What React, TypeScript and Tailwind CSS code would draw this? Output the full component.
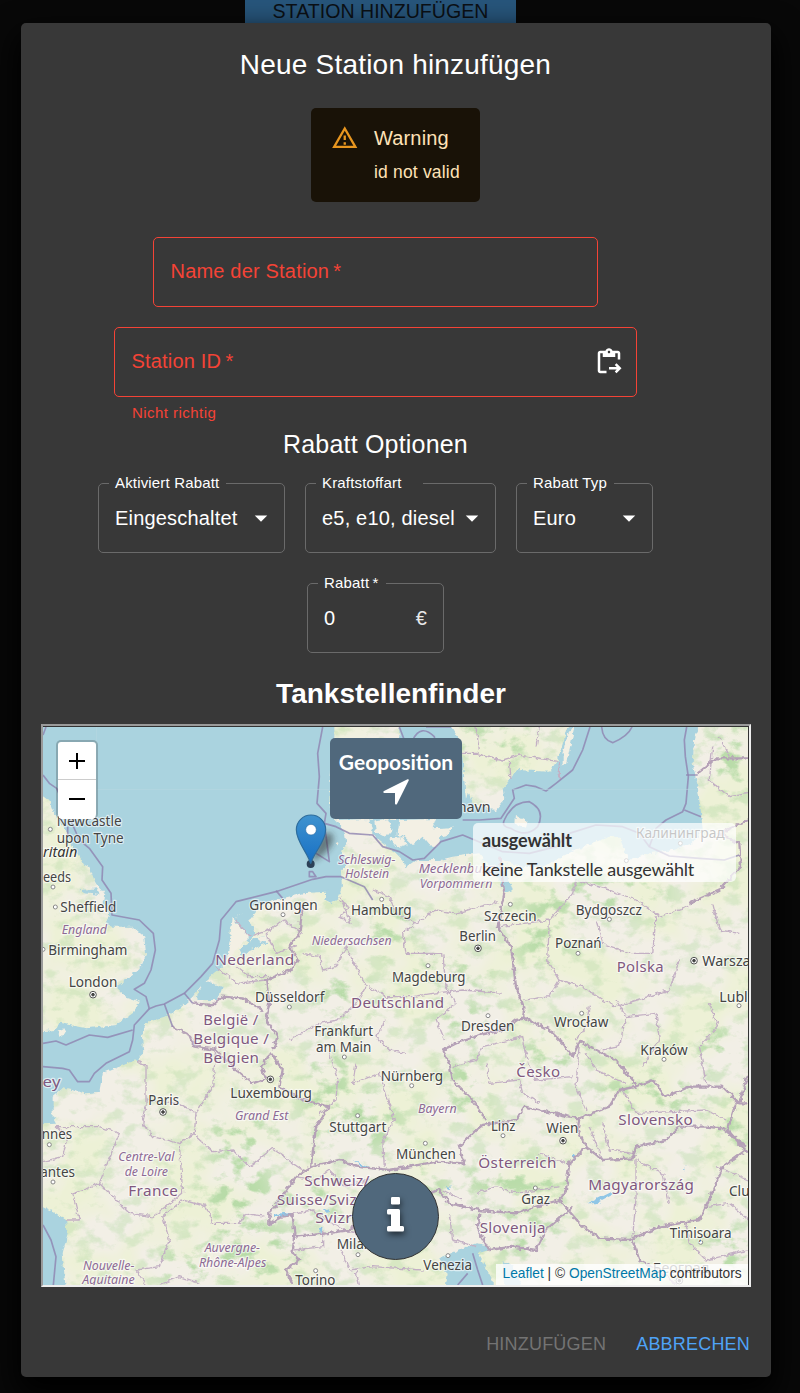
import React from "react";

type Label = [text: string, x: number, y: number, width: number];

/* Map units: three per CSS pixel. */
const cities: Label[] = [
  ["Newcastle", 62, 317, 195],
  ["upon Tyne", 62, 370, 201],
  ["eeds", 21, 486, 84],
  ["Sheffield", 73, 577, 168],
  ["Birmingham", 37, 704, 237],
  ["London", 98, 801, 146],
  ["Groningen", 640, 570, 205],
  ["Hamburg", 945, 584, 182],
  ["Düsseldorf", 657, 846, 208],
  ["Magdeburg", 1068, 785, 220],
  ["Szczecin", 1344, 602, 158],
  ["Bydgoszcz", 1619, 584, 199],
  ["Berlin", 1270, 662, 110],
  ["Poznań", 1557, 683, 140],
  ["Warszawa", 1999, 738, 202],
  ["Lublin", 2050, 845, 122],
  ["København", 1136, 276, 228],
  ["Калининград", 1800, 354, 266],
  ["Frankfurt", 835, 947, 176],
  ["am Main", 840, 997, 166],
  ["Nürnberg", 1034, 1084, 187],
  ["Luxembourg", 583, 1134, 245],
  ["Paris", 337, 1155, 92],
  ["Stuttgart", 880, 1236, 171],
  ["München", 1080, 1316, 180],
  ["Rennes", -30, 1258, 138],
  ["Nantes", -18, 1372, 135],
  ["Milano", 902, 1588, 132],
  ["Torino", 778, 1696, 120],
  ["Dresden", 1275, 933, 160],
  ["Wrocław", 1554, 922, 163],
  ["Kraków", 1813, 1004, 142],
  ["Linz", 1365, 1234, 73],
  ["Wien", 1531, 1239, 96],
  ["Graz", 1456, 1452, 86],
  ["Cluj-Napoca", 2079, 1428, 232],
  ["Timișoara", 1901, 1553, 186],
  ["Venezia", 1162, 1651, 146],
  ["Београд", 1850, 1660, 170],
];

const countries: Label[] = [
  ["Nederland", 538, 736, 238],
  ["Deutschland", 945, 863, 280],
  ["Polska", 1742, 755, 142],
  ["België /", 502, 916, 166],
  ["Belgique /", 472, 973, 228],
  ["Belgien", 502, 1029, 168],
  ["France", 277, 1429, 150],
  ["Jersey", -72, 1101, 147],
  ["Schweiz/", 805, 1397, 196],
  ["Suisse/Svizzera/", 723, 1454, 350],
  ["Svizra", 838, 1510, 138],
  ["Česko", 1441, 1072, 132],
  ["Slovensko", 1747, 1216, 224],
  ["Österreich", 1327, 1345, 235],
  ["Magyarország", 1657, 1409, 318],
  ["Slovenija", 1331, 1540, 199],
];

const regions: Label[] = [
  ["England", 77, 643, 136],
  ["Schleswig-", 906, 431, 172],
  ["Holstein", 927, 474, 132],
  ["Niedersachsen", 827, 675, 240],
  ["Mecklenburg-", 1148, 459, 242],
  ["Vorpommern", 1151, 503, 218],
  ["Grand Est", 597, 1199, 160],
  ["Bayern", 1146, 1179, 116],
  ["Centre-Val", 247, 1324, 168],
  ["de Loire", 266, 1368, 130],
  ["Auvergne-", 506, 1596, 166],
  ["Rhône-Alpes", 489, 1640, 202],
  ["Nouvelle-", 141, 1650, 154],
  ["Aquitaine", 139, 1693, 157],
];

const towns: [number, number][] = [
  [43, 328], [51, 501], [58, 561], [21, 688], [741, 584], [1037, 538], [760, 861],
  [1176, 737], [1423, 553], [1720, 598], [1626, 700], [2109, 857], [1771, 422],
  [1933, 370], [925, 1011], [1127, 1097], [965, 1187], [1168, 1270], [40, 1274],
  [51, 1386], [966, 1604], [839, 1652], [1356, 887], [1637, 880], [1884, 1018],
  [1401, 1247], [1498, 1404], [1994, 1567], [1236, 1607],
];

const capitals: [number, number][] = [
  [171, 824], [1326, 685], [1974, 722], [703, 1078], [381, 1176], [1581, 1262], [1930, 1682],
];

const water = [
  "M0 0H895V55L885 150L880 240L890 290L925 330L932 375L915 390L935 430L915 455L918 500L905 540L885 545L870 515L800 520L740 535L650 558L600 590L585 620L580 700L560 740L500 790L470 830L430 866L385 890L325 910L318 950L322 1000L300 1020L250 1040L200 1060L190 1115L150 1120L80 1105L50 1130V1190L60 1208L0 1210V935L60 930L70 908L100 915L150 925L240 915L290 880L312 845L270 830L240 800L270 780L310 745L330 700L325 650L290 620L230 620L210 610L220 580L200 550L205 520L175 480L160 440L140 430L110 380L90 330L60 290L40 240L0 210Z",
  "M0 1450L60 1480L90 1500L95 1540L80 1600L90 1720H0Z",
  "M1225 1720L1235 1665L1210 1615L1280 1585L1320 1570L1350 1575L1360 1590L1325 1600L1370 1680V1720Z",
  "M1400 1620L1430 1640L1470 1720H1410Z",
  "M1090 0H1235L1270 60L1280 120L1290 240L1295 215L1320 260L1380 270L1405 240L1400 205L1425 175L1440 150L1540 155L1565 120L1590 40L1600 0H2000L1975 50L1970 130L1985 200L1995 280L2000 330L1970 370L1910 390L1840 400L1780 420L1765 390L1750 350H1720L1640 380L1580 410L1520 440H1460L1390 420L1420 480L1430 510L1405 520L1390 480L1330 400L1250 410L1210 420H1140L1105 445L1100 420L1080 400L1040 370L1010 345L930 335L900 300L905 290L1080 300L1090 200Z",
  "M640 560L665 570L640 600L655 640L640 670L625 660L615 620L590 600Z",
  "M660 650L690 645L695 670L640 690L620 710L610 690Z",
  "M500 780L560 800L545 840L480 840Z",
  "M130 510L185 505L190 525L145 520Z",
  "M870 510L890 520L885 555L870 540Z",
];

const islands = [
  "M1440 285L1475 305L1470 323L1438 312Z",
  "M1595 45L1618 10L1605 70L1590 130L1580 140V100Z",
  "M900 300L1000 297L1010 340L985 355L960 340L930 340Z",
  "M1015 305L1055 298L1070 330L1050 352L1020 335Z",
  "M1090 300L1200 297L1190 325L1250 322L1235 345L1210 350L1205 380L1180 375L1160 350L1130 375L1105 350L1085 345Z",
  "M1060 355L1100 352L1115 375L1085 385Z",
  "M590 592L610 620L640 650L600 690L570 735L585 640Z",
  "M65 935L85 925L92 938L70 947Z",
  "M665 650L690 645L695 665L672 668Z",
  "M900 370L912 365L906 380Z",
];

const seaBorders = [
  "M21 165L40 190L62 205L130 360L160 385L200 440L198 480L225 520L228 585L310 600L352 640L358 690L345 750L325 790L295 808L330 830L340 866L360 858L385 852L445 820L495 770L530 730L550 660L555 600L600 545L720 515L830 478L870 470H915L950 485L985 500L1010 540",
  "M720 512L740 535",
  "M860 21L845 100L850 170L843 250L870 280L865 310L900 320L940 340L1010 345L1040 380L1090 395L1130 420L1165 415L1215 365L1280 345L1400 395L1480 400L1560 380L1600 340L1680 315L1760 320L1810 340L1840 380L1900 408L1990 415L2065 420L2110 405",
  "M865 310L880 425L840 400M820 455H830L840 470H820Z",
  "M1090 21L1105 60L1080 80M1130 60Q1155 10 1195 50L1200 90M1170 21H1245",
  "M1280 300L1330 300L1395 295L1435 235L1430 210L1470 195L1500 200L1530 213L1560 190L1610 150L1640 90L1662 21",
  "M1405 300Q1430 245 1480 245Q1530 270 1505 320Q1470 355 1425 325Q1395 320 1405 300",
  "M1697 21Q1700 60 1730 68Q1775 50 1788 21",
  "M1952 21L1945 60L1948 110L1957 170L1950 250L1940 275L1890 300L1860 325L1840 380",
  "M1950 165H1985M1945 270L1995 290",
  "M385 852L410 920M445 820L470 850M340 866L295 915L290 960L280 995L210 1030L175 1060L160 1085H125L100 1050L80 1045L21 1040",
  "M21 970L60 963L90 975L160 945L215 952L290 930",
  "M21 1515L45 1560L60 1610L52 1695",
  "M1310 1600L1325 1650L1340 1695M1295 1660L1265 1695",
  "M21 45L30 21M95 320V350",
];

const borders = [
  "M800 560L790 640L760 680L785 720L765 750L690 780L700 850L690 900L725 950L710 990",
  "M470 850L530 855L560 830L620 835L680 870",
  "M410 920L460 945L475 980L540 990L600 1050L650 1090L690 1075L675 1040L705 1000L740 1050L730 1100L800 1140L880 1160L840 1220L825 1340L780 1370L745 1420L700 1480L700 1515L735 1490L770 1485L775 1540L770 1600L790 1620L750 1650L770 1695",
  "M825 1340L910 1320L960 1340L1060 1350L1120 1340L1200 1325L1285 1330L1270 1280L1320 1230L1340 1215L1440 1200L1465 1160L1510 1170L1600 1190L1630 1195",
  "M1350 1200L1310 1140L1250 1080L1240 1030L1220 990L1260 970L1330 945L1400 930L1440 900L1470 895L1540 930L1580 970L1610 1010L1630 965L1690 995L1740 1020L1790 1080L1800 1100",
  "M1390 410L1405 520L1385 620L1425 680L1440 800L1465 865L1460 900",
  "M1630 1195L1720 1160L1750 1110L1800 1100L1850 1080L1890 1130L1960 1100L2060 1100L2110 1150H2137",
  "M1630 1195L1625 1230L1650 1280L1700 1320L1790 1315L1800 1280L1890 1260L1930 1220L2010 1220L2060 1225L2130 1280",
  "M1650 1280L1600 1330L1590 1410L1570 1440L1500 1460L1440 1480L1330 1470L1240 1450L1210 1410",
  "M1570 1440L1640 1520L1690 1555L1780 1560L1870 1520L1990 1500L2020 1440L2060 1340L2130 1290",
  "M1330 1480L1325 1530L1360 1590L1430 1580L1500 1590L1530 1530L1610 1460",
  "M1210 1410L1150 1430L1060 1440L940 1530L870 1540L780 1550",
  "M1790 1560L1810 1620L1870 1650L1920 1695",
  "M2137 115L2040 115L1985 160M2137 300L2050 340L2110 370L2115 440L2050 510L1960 550",
  "M2100 1150L2075 1230L2137 1300M2137 1060L2110 1150",
];

const provinces = [
  "M1240 100L1320 100L1400 120L1450 105L1540 120L1570 125V180M1320 21L1330 90M1510 21L1500 80M1425 180L1420 120",
  "M600 600L640 650L700 630L740 600L800 640M690 640L720 700L780 680M600 740L640 770L700 770M540 740L600 790L690 780",
  "M905 540L940 560L910 590L945 610L915 530M800 700L850 710L860 750L900 740L930 680L970 760L990 800L960 850L905 900L850 910L760 960",
  "M1010 510L1060 530L1080 580L1140 610L1200 570L1260 580L1385 545M1140 610L1100 640L1110 700L1220 700L1230 800L1260 850L1200 900L1225 960",
  "M1000 800L1050 830L1130 830L1190 820L1280 810L1400 820M1390 620L1540 600L1610 520L1620 480L1720 510L1800 540L1870 590L1960 560",
  "M1540 600L1535 720L1570 780L1640 800L1700 840L1740 860L1900 810L1930 720M1680 600L1700 670L1780 700L1850 700L1860 590M2030 550L2050 630L2110 640",
  "M1465 840L1540 830L1570 780M1660 860L1650 920L1620 960M1740 840L1770 890L1750 980L1700 990M1770 890L1860 880L1870 960L1820 1040M2020 850L2045 920L1990 980L2010 1090",
  "M1250 1040L1320 1020L1340 980L1460 950L1480 1040M1350 1030L1360 1090L1450 1080L1460 1120L1510 1150M1480 1040L1500 1080L1610 1070M1630 970L1620 1100L1650 1170M1650 1000L1680 1050L1770 1090",
  "M300 1020L330 1040V1160L320 1210L350 1250L430 1270L440 1420L350 1490L280 1480L190 1390L250 1240L190 1220L60 1220",
  "M330 1140L430 1150L480 1180L475 1240L430 1270M540 980L530 1100L480 1180M480 1250L530 1295L590 1290L640 1340L710 1285L770 1330L800 1350",
  "M440 1440L510 1460L530 1510L610 1510L630 1480L690 1490M440 1440L380 1490L400 1560L370 1640L300 1650L330 1695M370 1695L430 1670L490 1690M190 1390L110 1420L130 1500L90 1500M60 1220L95 1250L80 1310L21 1325",
  "M1050 900L1020 950L1060 990L1110 1000M880 1000L905 1070L900 1140L850 1180M960 1030L950 1090L1030 1060L1050 1120L1075 1200L1040 1260L1045 1340",
  "M780 1370L840 1380L880 1350L930 1400L1000 1380M770 1480L830 1470L870 1500L930 1530L960 1540M775 1590L860 1580V1530M915 1590L940 1650L1010 1640L1160 1650M960 1650L970 1695",
  "M1320 1420L1380 1400L1440 1420L1570 1400M1220 1410L1280 1440M1510 1300L1590 1330M1660 1220L1700 1320M1700 1210L1720 1290L1790 1300M1800 1320L1880 1360L1900 1450M1800 1320V1440L1790 1550M1760 1110L1800 1180L2010 1170L2070 1200",
  "M2040 1340L2137 1380M2010 1460L2080 1450L2137 1500M1950 1510L1960 1570L2010 1620L2137 1590M2030 80L2020 180L2080 230L2137 220M2050 50L2080 110M1240 1480L1250 1560L1320 1580",
];

const lakes = [
  "M1655 1450L1725 1415L1735 1420L1680 1450Z",
  "M703 1492Q740 1470 768 1485L735 1488Z",
  "M950 1320L1000 1340L985 1345Z",
  "M1610 1305L1620 1298L1612 1325Z",
  "M862 1470L880 1465L878 1478Z",
  "M848 1525L860 1522L856 1540Z",
  "M1232 1398L1245 1400L1240 1408Z",
  "M1945 1345L1952 1335L1945 1355Z",
];

/* Wooded uplands, drawn as soft ellipses: cx, cy, rx, ry. */
const uplands: [number, number, number, number][] = [
  [1380, 60, 130, 50], [2080, 130, 60, 110], [1300, 900, 120, 40], [1560, 1000, 110, 50],
  [1450, 1380, 170, 60], [1120, 1400, 130, 50], [880, 1130, 70, 150], [930, 850, 90, 90],
  [1850, 1120, 170, 60], [2080, 1230, 60, 60], [1440, 1540, 130, 60], [1010, 1200, 80, 90],
  [620, 1250, 110, 60], [600, 1420, 110, 110], [650, 1600, 130, 90], [2080, 1600, 60, 90],
  [1700, 520, 200, 60], [1520, 640, 80, 100], [840, 1440, 90, 60], [1060, 620, 60, 80],
  [1290, 1090, 60, 100], [1250, 760, 120, 40], [2040, 980, 70, 60], [460, 1640, 90, 60],
];

function MapLabels({ items, className }: { items: Label[]; className: string }) {
  return (
    <g className={className} stroke="#ffffff" strokeOpacity={0.6} strokeWidth={7} strokeLinejoin="round" paintOrder="stroke">
      {items.map(([text, x, y, width]) => (
        <text key={text} x={x} y={y} textLength={width} lengthAdjust="spacingAndGlyphs">
          {text}
        </text>
      ))}
    </g>
  );
}

function EuropeMap() {
  return (
    <svg viewBox="21 21 2115 1674" className="block h-[558px] w-[705px]">
      <defs>
        <filter id="rough" filterUnits="userSpaceOnUse" x="0" y="0" width="2160" height="1720">
          <feTurbulence type="fractalNoise" baseFrequency="0.07" numOctaves="2" seed="4" />
          <feDisplacementMap in="SourceGraphic" scale="16" xChannelSelector="R" yChannelSelector="G" />
        </filter>
        <filter id="forest" x="0" y="0" width="100%" height="100%" colorInterpolationFilters="sRGB">
          <feTurbulence type="fractalNoise" baseFrequency="0.017 0.024" numOctaves="5" seed="12" />
          <feColorMatrix values="0 0 0 0 .72  0 0 0 0 .86  0 0 0 0 .66  5 0 0 0 -2.5" />
        </filter>
        <filter id="farm" x="0" y="0" width="100%" height="100%" colorInterpolationFilters="sRGB">
          <feTurbulence type="fractalNoise" baseFrequency="0.005" numOctaves="3" seed="7" />
          <feColorMatrix values="0 0 0 0 .93  0 0 0 0 .945  0 0 0 0 .84  4 0 0 0 -1.6" />
        </filter>
        <filter id="soft" filterUnits="userSpaceOnUse" x="0" y="0" width="2160" height="1720">
          <feGaussianBlur stdDeviation="28" />
        </filter>
        <mask id="wooded" maskUnits="userSpaceOnUse" x="0" y="0" width="2160" height="1720">
          <rect width="2160" height="1720" fill="#666" />
          <g fill="#fff" filter="url(#soft)">
            {uplands.map(([cx, cy, rx, ry]) => <ellipse key={`${cx}-${cy}`} cx={cx} cy={cy} rx={rx} ry={ry} />)}
          </g>
        </mask>
        <filter id="shade" x="-50%" y="-50%" width="200%" height="200%">
          <feGaussianBlur stdDeviation="9" />
        </filter>
        <linearGradient id="pin" x1="0" y1="0" x2="0" y2="1">
          <stop offset="0" stopColor="#3f93cf" />
          <stop offset="1" stopColor="#176fc4" />
        </linearGradient>
      </defs>

      <rect x="21" y="21" width="2115" height="1674" fill="#f2efe6" />
      <rect x="21" y="21" width="2115" height="1674" filter="url(#farm)" />
      <g mask="url(#wooded)">
        <rect x="21" y="21" width="2115" height="1674" filter="url(#forest)" />
      </g>

      <g filter="url(#rough)">
        <g fill="#aad3df">{water.map((d) => <path key={d} d={d} />)}</g>
        <g fill="#f3f0e4">{islands.map((d) => <path key={d} d={d} />)}</g>
        <g fill="#8fc6e6">{lakes.map((d) => <path key={d} d={d} />)}</g>
        <g fill="none" stroke="#c3b0c4" strokeWidth="4" strokeLinejoin="round">
          {provinces.map((d) => <path key={d} d={d} />)}
        </g>
        <g fill="none" stroke="#b5a1b7" strokeWidth="7" strokeLinejoin="round">
          {borders.map((d) => <path key={d} d={d} />)}
        </g>
      </g>
      <g fill="none" stroke="#8e83b0" strokeOpacity="0.8" strokeWidth="5" strokeLinejoin="round">
        {seaBorders.map((d) => <path key={d} d={d} />)}
      </g>
      <path d="M181 208H880M1430 208H1985M181 21V350" stroke="#b6d7e1" strokeWidth="2" />

      <g fill="#fff" stroke="#888" strokeWidth="3">
        {towns.map(([x, y]) => <circle key={`${x}-${y}`} cx={x} cy={y} r="6" />)}
        {capitals.map(([x, y]) => (
          <g key={`${x}-${y}`}>
            <circle cx={x} cy={y} r="10" stroke="#555" />
            <circle cx={x} cy={y} r="4" fill="#444" stroke="#444" />
          </g>
        ))}
      </g>

      <MapLabels items={regions} className="fill-[#8d6a95] font-['Noto_Sans'] text-[38px] italic" />
      <MapLabels items={countries} className="fill-[#80587f] font-['Noto_Sans'] text-[45px] tracking-[1px]" />
      <MapLabels items={cities} className="fill-[#444444] font-['Noto_Sans'] text-[42px]" />
      <MapLabels items={[["Britain", -5, 410, 129]]} className="fill-[#333333] font-['Noto_Sans'] text-[42px] italic" />

      <path d="M824 428L845 360Q880 320 892 350Q895 390 824 428Z" fill="#222" opacity="0.5" filter="url(#shade)" />
      <circle cx="824" cy="432" r="12" fill="#2c4057" />
      <path
        d="M824 431C816 400 781 365 781 329A44 44 0 0 1 869 329C869 365 832 400 824 431Z"
        fill="url(#pin)"
        stroke="#2e6c9c"
        strokeWidth="3.5"
      />
      <circle cx="825" cy="329" r="16" fill="#fff" stroke="#2c6ea6" strokeWidth="2" />
    </svg>
  );
}

function SelectField({ label, value, className, notch }: { label: string; value: string; className: string; notch: string }) {
  return (
    <div className={`relative flex h-[70px] items-center rounded-[5px] border border-[#6a6a6a] pl-4 ${className}`}>
      <span className={`absolute -top-[10px] left-[10px] h-[18px] bg-[#383838] pl-1.5 text-[15px] leading-[18px] tracking-[.17px] whitespace-nowrap ${notch}`}>
        {label}
      </span>
      <span className="grow whitespace-nowrap">{value}</span>
      <svg viewBox="0 0 24 24" className="mr-[8px] -ml-2 size-[30px] shrink-0 fill-white">
        <path d="m7 10 5 5 5-5z" />
      </svg>
    </div>
  );
}

export default function App() {
  return (
    <div className="flex h-[1393px] w-[800px] flex-col overflow-hidden bg-[#080808] font-['Liberation_Sans',Arial,sans-serif] text-white">
      <div className="ml-[245px] h-[23px] w-[271px] shrink-0 overflow-hidden bg-[#27557b] text-center text-[19.6px] leading-[23px] whitespace-nowrap text-[#0b1015]">
        STATION HINZUFÜGEN
      </div>

      <div className="ml-[21px] flex h-[1354px] w-[750px] shrink-0 flex-col rounded-[5px] bg-[#383838] px-5 shadow-[0_14px_30px_4px_#000]">
        <h2 className="mt-[22px] h-[40px] pr-px text-center text-[28px] leading-[40px] tracking-[.2px]">Neue Station hinzufügen</h2>

        <div className="mt-[23px] ml-[270px] flex h-[94px] w-[169px] shrink-0 rounded-[5px] bg-[#191207] text-[#ffe2b7]">
          <svg viewBox="0 0 24 24" className="mt-4 ml-[20px] size-[27.5px] shrink-0 fill-[#e8961f]">
            <path d="M12 5.99 19.53 19H4.47L12 5.99M12 2 1 21h22L12 2zm1 14h-2v2h2v-2zm0-6h-2v4h2v-4z" />
          </svg>
          <div className="ml-[15.5px] whitespace-nowrap">
            <div className="mt-[15px] text-[20px] leading-[30px] tracking-[.15px]">Warning</div>
            <div className="mt-1.5 text-[17.5px] leading-[26px] tracking-[.18px]">id not valid</div>
          </div>
        </div>

        <div className="mt-[35px] flex h-[416px] shrink-0 flex-col items-center pr-[41px] text-[20px] tracking-[.19px]">
          <div className="flex h-[70px] w-[445px] shrink-0 items-center rounded-[5px] border border-[#f44336] pb-0.5 pl-[16.5px] text-[#f44336]">
            Name der Station&thinsp;*
          </div>
          <div className="mt-5 flex h-[70px] w-[523px] shrink-0 items-center justify-between rounded-[5px] border border-[#f44336] pr-[12px] pl-[16.5px] text-[#f44336]">
            <span className="pb-0.5">Station ID&thinsp;*</span>
            <svg viewBox="0 0 24 24" className="size-[30px] fill-white">
              <path d="M5 5h2v3h10V5h2v5h2V5c0-1.1-.9-2-2-2h-4.18C14.4 1.84 13.3 1 12 1s-2.4.84-2.82 2H5c-1.1 0-2 .9-2 2v14c0 1.1.9 2 2 2h5v-2H5V5zm7-2c.55 0 1 .45 1 1s-.45 1-1 1-1-.45-1-1 .45-1 1-1z" />
              <path d="m18.01 13-1.42 1.41 1.58 1.58H12v2h6.17l-1.58 1.59 1.42 1.41 3.99-4z" />
            </svg>
          </div>
          <div className="mt-1 h-6 w-[487px] shrink-0 text-[15px] leading-6 tracking-[.45px] text-[#f44336]">Nicht richtig</div>
          <div className="h-[38px] shrink-0 text-[25px] leading-[38px]">Rabatt Optionen</div>
          <div className="mt-5 flex shrink-0 gap-5">
            <SelectField label="Aktiviert Rabatt" value="Eingeschaltet" className="w-[187px]" notch="w-[117px]" />
            <SelectField label="Kraftstoffart" value="e5, e10, diesel" className="w-[191px]" notch="w-[107px]" />
            <SelectField label="Rabatt Typ" value="Euro" className="w-[137px]" notch="w-[87px]" />
          </div>
          <div className="relative mt-[30px] flex h-[70px] w-[137px] shrink-0 items-center justify-between rounded-[5px] border border-[#6a6a6a] px-4">
            <span className="absolute -top-[10px] left-[10px] h-[18px] w-[68px] bg-[#383838] pl-1.5 text-[15px] leading-[18px]">Rabatt&thinsp;*</span>
            <span>0</span>
            <span className="text-[#e8e8e8]">€</span>
          </div>
        </div>

        <h1 className="mt-[21px] h-[40px] pr-[10px] text-center text-[28px] leading-[40px] font-bold">Tankstellenfinder</h1>

        <div className="relative mt-[10px] h-[563px] w-[710px] shrink-0 overflow-hidden border-2 border-t-[#9a9a9a] border-r-[#eeeeee] border-b-[#eeeeee] border-l-[#9a9a9a] bg-[#333333] pt-px">
          <EuropeMap />

          <div className="absolute top-[14px] left-[13px] flex h-[79px] w-[42px] flex-col overflow-hidden rounded-[5px] border-2 border-b-0 border-black/20 bg-white bg-clip-padding">
            <span className="flex h-[38px] items-center justify-center border-b border-[#cccccc]">
              <svg viewBox="0 0 16 16" className="size-4 stroke-black stroke-2"><path d="M0 8h16M8 0v16" /></svg>
            </span>
            <span className="flex h-[38px] items-center justify-center">
              <svg viewBox="0 0 16 16" className="size-4 stroke-black stroke-2"><path d="M0 8h16" /></svg>
            </span>
          </div>

          <div className="absolute top-[12px] left-[287px] flex h-[81px] w-[132px] flex-col items-center rounded-[5px] bg-[#50687c] font-['Lato',sans-serif] text-[21px] leading-[28px] font-bold">
            <span className="mt-[10px]">Geoposition</span>
            <svg viewBox="0 0 26 26" className="mt-[3px] size-[26px] fill-white">
              <path d="M25.6.4Q26 .9 25.7 1.5L14 25Q13.700 25.700 12.800 25.600Q12 25.300 12 24.500V14H1.400Q.5 14 .3 13.200Q.2 12.400 1 12L24.500.3Q25.200 0 25.600.4Z" />
            </svg>
          </div>

          <div className="absolute top-[97px] left-[430px] h-[59px] w-[263px] rounded-[5px] bg-white/70 pl-[9px] font-['Lato',sans-serif] text-[18px] whitespace-nowrap text-[#333333]">
            <div className="mt-[3px] leading-[29px] font-bold tracking-[-.1px]">ausgewählt</div>
            <div className="leading-[29px] tracking-[-.23px]">keine Tankstelle ausgewählt</div>
          </div>

          <div className="absolute top-[447px] left-[309px] flex size-[87px] items-center justify-center rounded-full border border-[#333333] bg-[#50687c] pb-[5px]">
            <svg viewBox="0 0 17 35" className="h-[35px] w-[17px] fill-white drop-shadow-[1px_3px_3px_rgba(0,0,0,.6)]">
              <rect x="4" y="0" width="9" height="7.500" rx="1.200" />
              <path d="M1.500 12H11.500Q13 12 13 13.500V29H15.500Q17 29 17 30.500V33Q17 34.500 15.500 34.500H1.500Q0 34.500 0 33V30.500Q0 29 1.500 29H4V17.500H1.500Q0 17.500 0 16V13.500Q0 12 1.500 12Z" />
            </svg>
          </div>

          <div className="absolute right-px bottom-0 h-[21px] w-[252px] bg-white/80 pl-[6.5px] text-[13.75px] leading-[19px] whitespace-nowrap text-[#333333]">
            <span className="text-[#0078a8]">Leaflet</span> | © <span className="text-[#0078a8]">OpenStreetMap</span> contributors
          </div>
        </div>

        <div className="mt-[42px] flex h-[30px] justify-end gap-[30px] pr-px text-[18px] leading-[30px] tracking-[.2px]">
          <span className="text-[#737373]">HINZUFÜGEN</span>
          <span className="text-[#4fa3f7]">ABBRECHEN</span>
        </div>
      </div>
    </div>
  );
}
